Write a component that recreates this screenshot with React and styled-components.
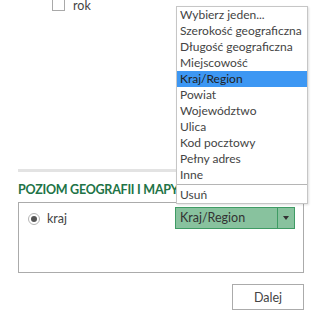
import React, { useState } from 'react';
import styled, { createGlobalStyle } from 'styled-components';

const GlobalStyle = createGlobalStyle`
    html, body {
        margin: 0;
        padding: 0;
        background: #fff;
    }
    body {
        font-family: Lato, "Open Sans", Arial, sans-serif;
        font-size: 12px;
        color: #444;
    }
`;

const Page = styled.div`
    position: relative;
    width: 315px;
    height: 319px;
    overflow: hidden;
    padding: 0 11px 0 18px;
    box-sizing: border-box;
`;

const CheckRow = styled.label`
    display: flex;
    align-items: center;
    gap: 8px;
    margin: -1px 0 0 34px;
    height: 13px;
    color: #444;
    font-size: 12.5px;
    line-height: 13px;
`;

const CheckBox = styled.span`
    width: 13px;
    height: 13px;
    margin-top: -2px;
    border: 1px solid #a9a9a9;
    box-sizing: border-box;
    background: #fff;
`;

const Divider = styled.div`
    height: 3px;
    background: #e3e3e3;
    margin-top: 157px;
`;

const Title = styled.h3`
    margin: 10px 0 5px;
    font-size: 12.5px;
    font-weight: 700;
    color: #217346;
    line-height: 15px;
    letter-spacing: -0.25px;
    white-space: nowrap;
`;

const Box = styled.div`
    border: 1px solid #ababab;
    height: 71px;
    padding: 4px 8px 0 9px;
    box-sizing: border-box;
`;

const Row = styled.div`
    display: flex;
    align-items: center;
    justify-content: space-between;
`;

const RadioLabel = styled.label`
    display: flex;
    align-items: center;
    gap: 7px;
    margin-top: 1px;
    font-size: 12.5px;
`;

const Radio = styled.span`
    width: 12px;
    height: 12px;
    border-radius: 50%;
    border: 1px solid #b5b5b5;
    box-sizing: border-box;
    display: flex;
    align-items: center;
    justify-content: center;

    &::after {
        content: '';
        width: 6px;
        height: 6px;
        border-radius: 50%;
        background: ${p => (p.checked ? '#555' : 'transparent')};
    }
`;

const Select = styled.div`
    display: flex;
    width: 120px;
    height: 22px;
    border: 1px solid #3f9b64;
    box-sizing: border-box;
    background: #88c29e;
    color: #333;
    font-size: 12.5px;
`;

const SelectValue = styled.span`
    flex: 1;
    padding: 0 4px;
    line-height: 19px;
`;

const SelectArrow = styled.span`
    width: 16px;
    border-left: 1px solid #3f9b64;
    display: flex;
    align-items: center;
    justify-content: center;

    &::after {
        content: '';
        border-left: 3.5px solid transparent;
        border-right: 3.5px solid transparent;
        border-top: 4px solid #333;
    }
`;

const Footer = styled.div`
    display: flex;
    justify-content: flex-end;
    margin-top: 11px;
`;

const Button = styled.button`
    width: 72px;
    height: 26px;
    border: 1px solid #ababab;
    background: #fff;
    font-family: inherit;
    font-size: 12.5px;
    color: #444;
    padding: 0;
`;

const Menu = styled.ul`
    position: absolute;
    left: 176px;
    top: 6px;
    width: 132px;
    margin: 0;
    padding: 0;
    list-style: none;
    background: #fff;
    border: 1px solid #c6c6c6;
    box-sizing: border-box;
    box-shadow: 1px 1px 2px rgba(0, 0, 0, 0.12);
    z-index: 10;
`;

const MenuItem = styled.li`
    height: 16px;
    line-height: 16px;
    padding: 0 3px;
    white-space: nowrap;
    color: ${p => (p.active ? '#222' : '#444')};
    background: ${p => (p.active ? '#3d97f3' : 'transparent')};
`;

const MenuSeparator = styled.li`
    height: 1px;
    background: #b5b5b5;
    margin: 1px 0 2px;
`;

const options = [
    'Wybierz jeden...',
    'Szerokość geograficzna',
    'Długość geograficzna',
    'Miejscowość',
    'Kraj/Region',
    'Powiat',
    'Województwo',
    'Ulica',
    'Kod pocztowy',
    'Pełny adres',
    'Inne',
];

const App = () => {
    const [value] = useState('Kraj/Region');

    return (
        <Page>
            <GlobalStyle />
            <CheckRow>
                <CheckBox />
                <span>rok</span>
            </CheckRow>
            <Divider />
            <Title>POZIOM GEOGRAFII I MAPY</Title>
            <Box>
                <Row>
                    <RadioLabel>
                        <Radio checked />
                        <span>kraj</span>
                    </RadioLabel>
                    <Select>
                        <SelectValue>{value}</SelectValue>
                        <SelectArrow />
                    </Select>
                </Row>
            </Box>
            <Footer>
                <Button>Dalej</Button>
            </Footer>

            <Menu>
                {options.map(opt => (
                    <MenuItem key={opt} active={opt === value}>{opt}</MenuItem>
                ))}
                <MenuSeparator />
                <MenuItem>Usuń</MenuItem>
            </Menu>
        </Page>
    );
};

export default App;
